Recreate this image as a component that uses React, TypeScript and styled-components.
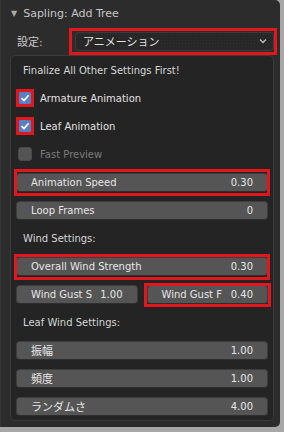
import styled, { createGlobalStyle, css } from 'styled-components';

const GlobalStyle = createGlobalStyle`
  html, body {
    margin: 0;
    padding: 0;
    background: #a7a7a7;
  }
  body {
    font-family: 'DejaVu Sans', 'Noto Sans CJK JP', sans-serif;
  }
`;

type Hl = [number, number, number, number];

// red annotation frame drawn over a control: top, right, bottom, left overhang
const marked = css<{ $hl?: Hl }>`
  position: relative;
  ${(p) =>
    p.$hl &&
    css`
      &::after {
        content: '';
        position: absolute;
        top: -${p.$hl[0]}px;
        right: -${p.$hl[1]}px;
        bottom: -${p.$hl[2]}px;
        left: -${p.$hl[3]}px;
        border: 3px solid #e3151d;
        pointer-events: none;
      }
    `}
`;

const Panel = styled.div`
  width: 280px;
  height: 427px;
  box-sizing: border-box;
  background: #2c2c2c;
  border-left: 1px solid #363636;
  border-radius: 0 5px 5px 0;
  display: flex;
  flex-direction: column;
`;

const Header = styled.div`
  height: 27px;
  display: flex;
  align-items: center;
  gap: 6px;
  padding-left: 10px;
  color: #c6c6c6;
  font-size: 11px;
`;

const Triangle = styled.span`
  font-size: 8px;
  color: #a8a8a8;
  line-height: 1;
`;

const SettingRow = styled.div`
  height: 28px;
  display: flex;
  align-items: center;
  justify-content: space-between;
  padding: 0 6px 0 16px;
`;

const RowLabel = styled.span`
  color: #c8c8c8;
  font-size: 11px;
`;

const Dropdown = styled.div<{ $hl?: Hl }>`
  ${marked}
  width: 199px;
  height: 19px;
  box-sizing: border-box;
  display: flex;
  align-items: center;
  justify-content: space-between;
  padding: 0 6px 0 7px;
  background: #272727;
  background-image: radial-gradient(#2f2f2f 0.6px, transparent 0.7px);
  background-size: 3px 3px;
  border: 1px solid #3b3b3b;
  border-radius: 4px;
  color: #e2e2e2;
  font-size: 11px;
`;

const Box = styled.div`
  margin: 0 6px 0 9px;
  background: #242424;
  border: 1px solid #3a3a3a;
  border-radius: 5px;
  padding: 0 5px;
  display: flex;
  flex-direction: column;
`;

const Row = styled.div`
  height: 28px;
  display: flex;
  align-items: center;
`;

const SplitRow = styled.div`
  height: 28px;
  display: grid;
  grid-template-columns: minmax(0, 1fr) minmax(0, 1fr);
  column-gap: 9px;
  align-items: center;
`;

const Note = styled.span`
  padding-left: 7px;
  color: #d6d6d6;
  font-size: 10px;
`;

const CheckRow = styled.label<{ $disabled?: boolean }>`
  display: flex;
  align-items: center;
  gap: 8px;
  padding-left: 2px;
  color: ${(p) => (p.$disabled ? '#7c7c7c' : '#e2e2e2')};
  font-size: 10px;
`;

const Tick = styled.span<{ $on: boolean; $hl?: Hl }>`
  ${marked}
  width: 14px;
  height: 14px;
  box-sizing: border-box;
  border-radius: 3px;
  display: flex;
  align-items: center;
  justify-content: center;
  background: ${(p) => (p.$on ? '#5781c4' : '#545454')};
  ${(p) =>
    !p.$on &&
    css`
      background-image: radial-gradient(#5e5e5e 0.6px, transparent 0.7px);
      background-size: 2px 2px;
    `}
  border: 1px solid ${(p) => (p.$on ? '#4a6ea8' : '#4a4a4a')};
`;

const Slider = styled.div<{ $hl?: Hl }>`
  ${marked}
  width: 100%;
  height: 19px;
  box-sizing: border-box;
  display: flex;
  align-items: center;
  justify-content: space-between;
  padding: 0 14px 0 14px;
  background: #555555;
  border: 1px solid #3d3d3d;
  border-bottom-color: #2e2e2e;
  border-radius: 4px;
  color: #e6e6e6;
  font-size: 10px;
  white-space: nowrap;
`;

const Jp = styled.span`
  font-size: 11px;
`;

const Check = () => (
  <svg width="10" height="10" viewBox="0 0 10 10">
    <polyline points="1.5,5.2 4,7.6 8.6,2.2" fill="none" stroke="#ffffff" strokeWidth="1.6" />
  </svg>
);

const Chevron = () => (
  <svg width="8" height="6" viewBox="0 0 8 6">
    <polyline points="1,1.5 4,4.5 7,1.5" fill="none" stroke="#bdbdbd" strokeWidth="1.4" />
  </svg>
);

const Checkbox = ({ label, on, disabled }: { label: string; on: boolean; disabled?: boolean }) => (
  <CheckRow $disabled={disabled}>
    <Tick $on={on} $hl={on ? [3, 3, 3, 3] : undefined}>
      {on && <Check />}
    </Tick>
    {label}
  </CheckRow>
);

const Field = ({ label, value, hl }: { label: React.ReactNode; value: string; hl?: Hl }) => (
  <Slider $hl={hl}>
    <span>{label}</span>
    <span>{value}</span>
  </Slider>
);

export default function App() {
  return (
    <>
      <GlobalStyle />
      <Panel>
        <Header>
          <Triangle>▼</Triangle>
          Sapling: Add Tree
        </Header>
        <SettingRow>
          <RowLabel>設定:</RowLabel>
          <Dropdown $hl={[5, 4, 5, 7]}>
            アニメーション
            <Chevron />
          </Dropdown>
        </SettingRow>
        <Box>
          <Row>
            <Note>Finalize All Other Settings First!</Note>
          </Row>
          <Row>
            <Checkbox label="Armature Animation" on />
          </Row>
          <Row>
            <Checkbox label="Leaf Animation" on />
          </Row>
          <Row>
            <Checkbox label="Fast Preview" on={false} disabled />
          </Row>
          <Row>
            <Field label="Animation Speed" value="0.30" hl={[5, 3, 5, 3]} />
          </Row>
          <Row>
            <Field label="Loop Frames" value="0" />
          </Row>
          <Row>
            <Note>Wind Settings:</Note>
          </Row>
          <Row>
            <Field label="Overall Wind Strength" value="0.30" hl={[4, 3, 5, 3]} />
          </Row>
          <SplitRow>
            <Field label="Wind Gust S" value="1.00" />
            <Field label="Wind Gust F" value="0.40" hl={[3, 4, 4, 4]} />
          </SplitRow>
          <Row>
            <Note>Leaf Wind Settings:</Note>
          </Row>
          <Row>
            <Field label={<Jp>振幅</Jp>} value="1.00" />
          </Row>
          <Row>
            <Field label={<Jp>頻度</Jp>} value="1.00" />
          </Row>
          <Row>
            <Field label={<Jp>ランダムさ</Jp>} value="4.00" />
          </Row>
        </Box>
      </Panel>
    </>
  );
}
